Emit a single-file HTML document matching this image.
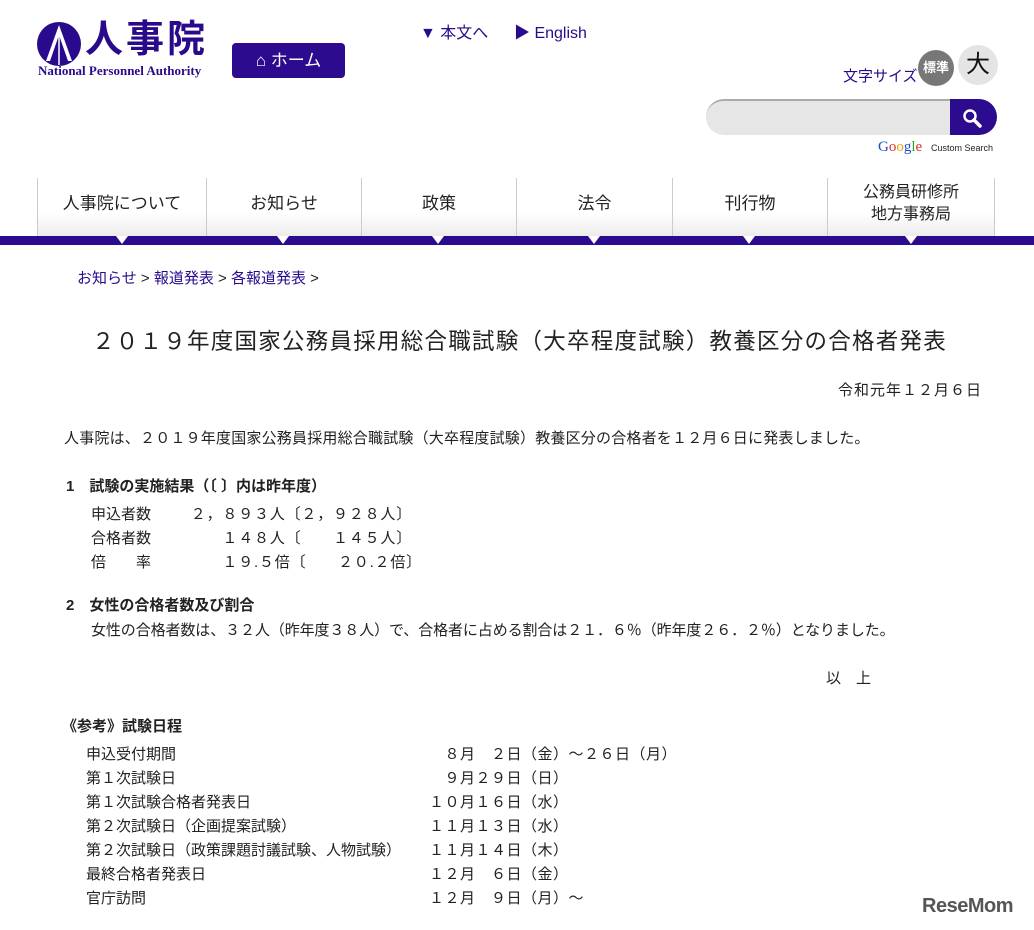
<!DOCTYPE html>
<html><head><meta charset="utf-8"><style>
*{margin:0;padding:0;box-sizing:border-box}
body{width:1034px;height:930px;background:#fff;position:relative;overflow:hidden;font-family:"Liberation Sans","Noto Sans CJK JP",sans-serif;color:#222}
.a{position:absolute;white-space:pre;line-height:1}
.p{color:#2a0a8c}
.t{font-size:15px}
.nav{position:absolute;top:178px;height:58px;border-left:1px solid #ccc;background:linear-gradient(#fff 60%,#ececec);display:flex;align-items:center;justify-content:center;text-align:center;font-size:17px;line-height:22px;color:#222;padding-bottom:6px}
.tri{position:absolute;top:236px;width:0;height:0;border-left:6px solid transparent;border-right:6px solid transparent;border-top:8px solid #fff}
</style></head><body>
<svg style="position:absolute;left:36px;top:21px" width="46" height="46" viewBox="0 0 46 46"><circle cx="23" cy="23" r="22" fill="#2a0a8c"/><path d="M23 4 L10 40 L14 40 L23 14 L32 40 L36 40 Z" fill="#fff"/><path d="M23 14 L23 44" stroke="#fff" stroke-width="1.5"/></svg>
<div class="a p" style="left:85px;top:21px;font-size:38px;font-weight:bold;letter-spacing:3px">人事院</div>
<div class="a p" style="left:38px;top:64px;font-family:'Liberation Serif',serif;font-weight:bold;font-size:13px">National Personnel Authority</div>
<div class="a" style="left:232px;top:43px;width:113px;height:35px;background:#2d0b8e;border-radius:4px;color:#fff;font-size:17px;line-height:35px;text-align:center">⌂ ホーム</div>
<div class="a p" style="left:420px;top:26px;font-size:16px">▼ 本文へ</div>
<div class="a p" style="left:514px;top:26px;font-size:16px">▶ English</div>
<div class="a p" style="left:843px;top:69px;font-size:15px">文字サイズ</div>
<div class="a" style="left:918px;top:50px;width:36px;height:36px;border-radius:50%;background:#777;color:#fff;font-size:13px;line-height:36px;text-align:center;font-weight:bold">標準</div>
<div class="a" style="left:958px;top:45px;width:40px;height:40px;border-radius:50%;background:#e4e4e4;color:#111;font-size:24px;line-height:40px;text-align:center">大</div>
<div class="a" style="left:706px;top:99px;width:250px;height:36px;background:#e6e6e6;border-radius:18px 0 0 18px;border-top:2px solid #aaa"></div>
<div class="a" style="left:950px;top:99px;width:47px;height:36px;background:#2d0b8e;border-radius:0 18px 18px 0"></div>
<svg style="position:absolute;left:962px;top:108px" width="20" height="20"><circle cx="8" cy="8" r="5.5" fill="none" stroke="#fff" stroke-width="2.5"/><path d="M12 12 L18 18" stroke="#fff" stroke-width="3.5" stroke-linecap="round"/></svg>
<div class="a" style="left:878px;top:140px;font-family:'Liberation Serif',serif;font-size:15px"><span style="color:#1a4fc7">G</span><span style="color:#d32">o</span><span style="color:#e9a600">o</span><span style="color:#1a4fc7">g</span><span style="color:#2a2">l</span><span style="color:#d32">e</span></div>
<div class="a" style="left:931px;top:144px;font-size:9px">Custom Search</div>
<div class="nav" style="left:37px;width:169px">人事院について</div>
<div class="nav" style="left:206px;width:155px">お知らせ</div>
<div class="nav" style="left:361px;width:155px">政策</div>
<div class="nav" style="left:516px;width:156px">法令</div>
<div class="nav" style="left:672px;width:155px">刊行物</div>
<div class="nav" style="left:827px;width:168px;border-right:1px solid #ccc;font-size:16px">公務員研修所<br>地方事務局</div>
<div class="a" style="left:0;top:236px;width:1034px;height:9px;background:#2d0b8e"></div>
<div class="tri" style="left:116px"></div><div class="tri" style="left:277px"></div><div class="tri" style="left:432px"></div><div class="tri" style="left:588px"></div><div class="tri" style="left:743px"></div><div class="tri" style="left:905px"></div>
<div class="a t" style="left:77px;top:271px"><span class="p">お知らせ</span> &gt; <span class="p">報道発表</span> &gt; <span class="p">各報道発表</span> &gt;</div>
<div class="a" style="left:92px;top:331px;font-size:22.5px;letter-spacing:1.25px">２０１９年度国家公務員採用総合職試験（大卒程度試験）教養区分の合格者発表</div>
<div class="a t" style="left:838px;top:383px;letter-spacing:1px">令和元年１２月６日</div>
<div class="a t" style="left:64px;top:431px;letter-spacing:0.2px">人事院は、２０１９年度国家公務員採用総合職試験（大卒程度試験）教養区分の合格者を１２月６日に発表しました。</div>
<div class="a t" style="left:66px;top:479px;font-weight:bold">1　試験の実施結果（〔 〕内は昨年度）</div>
<div class="a t" style="left:91px;top:503px;line-height:24px">申込者数<br>合格者数<br>倍　　率</div>
<div class="a t" style="left:175px;top:503px;line-height:24px;letter-spacing:0.8px">　２，８９３人〔２，９２８人〕<br>　　　１４８人〔　　１４５人〕<br>　　　１９.５倍〔　　２０.２倍〕</div>
<div class="a t" style="left:66px;top:598px;font-weight:bold">2　女性の合格者数及び割合</div>
<div class="a t" style="left:91px;top:623px;letter-spacing:-0.1px">女性の合格者数は、３２人（昨年度３８人）で、合格者に占める割合は２１．６％（昨年度２６．２％）となりました。</div>
<div class="a t" style="left:826px;top:671px">以　上</div>
<div class="a t" style="left:62px;top:719px;font-weight:bold">《参考》試験日程</div>
<div class="a t" style="left:86px;top:743px;line-height:24px">申込受付期間<br>第１次試験日<br>第１次試験合格者発表日<br>第２次試験日（企画提案試験）<br>第２次試験日（政策課題討議試験、人物試験）<br>最終合格者発表日<br>官庁訪問</div>
<div class="a t" style="left:429px;top:743px;line-height:24px;letter-spacing:0.5px">　８月　２日（金）～２６日（月）<br>　９月２９日（日）<br>１０月１６日（水）<br>１１月１３日（水）<br>１１月１４日（木）<br>１２月　６日（金）<br>１２月　９日（月）～</div>
<div class="a" style="left:922px;top:896px;font-size:20px;font-weight:bold;color:#555;letter-spacing:-0.5px">ReseMom</div>
</body></html>
